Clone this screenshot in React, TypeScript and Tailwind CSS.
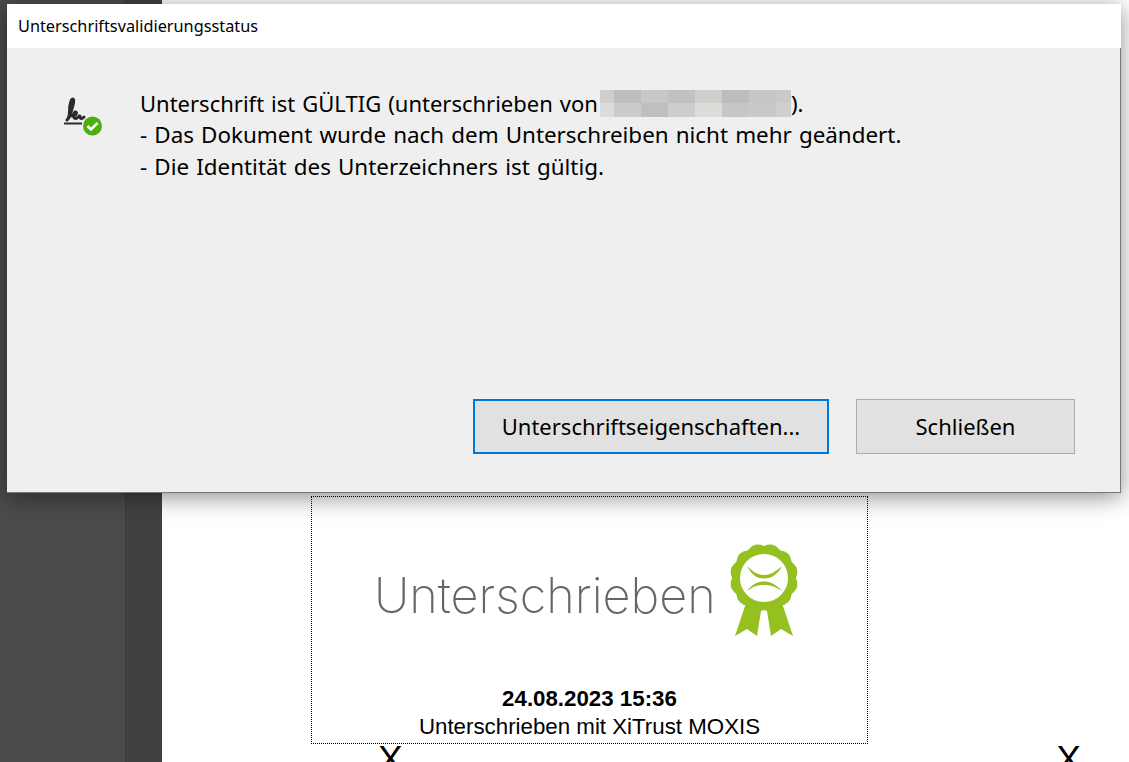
import React from 'react';

const uiFont = "font-['Noto_Sans','Open_Sans',sans-serif]";

// mosaic over the redacted signer name
const mosaicTop = [
  'w-[14px] bg-[#cfcfcd]',
  'w-[27px] bg-[#bdbdbd]',
  'w-[27px] bg-[#c8c8c5]',
  'w-[27px] bg-[#c1c1c1]',
  'w-[27px] bg-[#cfcfcc]',
  'w-[27px] bg-[#bcbdbf]',
  'w-[27px] bg-[#c6c6c6]',
  'w-[15px] bg-[#c9c9c9]',
];
const mosaicBottom = [
  'w-[14px] bg-[#dcdcdb]',
  'w-[27px] bg-[#cbcbcb]',
  'w-[27px] bg-[#bfbfbf]',
  'w-[27px] bg-[#cdcdcd]',
  'w-[27px] bg-[#dcdcda]',
  'w-[27px] bg-[#c6c6c6]',
  'w-[27px] bg-[#c9c9c9]',
  'w-[15px] bg-[#d0cfcc]',
];

// scalloped edge of the rosette
const rosette = (() => {
  const lobes = 12;
  const cx = 50;
  const cy = 37;
  let d = '';
  for (let i = 0; i < lobes; i++) {
    const a = (i / lobes) * Math.PI * 2 - Math.PI / 2;
    const m = ((i + 0.5) / lobes) * Math.PI * 2 - Math.PI / 2;
    const b = ((i + 1) / lobes) * Math.PI * 2 - Math.PI / 2;
    if (i === 0) d += `M${(cx + 32 * Math.cos(a)).toFixed(1)} ${(cy + 32 * Math.sin(a)).toFixed(1)}`;
    d += `Q${(cx + 37.5 * Math.cos(m)).toFixed(1)} ${(cy + 37.5 * Math.sin(m)).toFixed(1)} ${(cx + 32 * Math.cos(b)).toFixed(1)} ${(cy + 32 * Math.sin(b)).toFixed(1)}`;
  }
  return d + 'Z';
})();

const SignatureIcon = () => (
  <svg width="48" height="48" viewBox="0 0 48 48" className="mt-[8px] shrink-0">
    <path
      d="M7 25 C9 24 10 21 11 17 C12.5 12 14.5 7 13.5 4.5 C11.5 2.5 9.5 9 9.5 16 C9.5 20 9 23 7 25 M10.5 20 C13 22 16 20.5 16.5 18 C15.5 15.5 13 18 13.5 21.5 C14.5 25 18 23.5 20 20 C19.5 23 21 25 24 22"
      fill="none"
      stroke="#2b2b2b"
      strokeWidth="3"
      strokeLinecap="round"
    />
    <path d="M4 28.5 H22" stroke="#2b2b2b" strokeWidth="2" />
    <circle cx="32.5" cy="31" r="9.5" fill="#4caf0e" />
    <path d="M27.5 31 L31 34.5 L37.5 28" fill="none" stroke="#ffffff" strokeWidth="2.6" />
  </svg>
);

const Badge = () => (
  <svg width="100" height="100" viewBox="0 0 100 100" className="shrink-0 blur-[0.4px]">
    <path d="M32 62 L21 95 L33 88 L43 95 L47 70 Z" fill="#94c11f" />
    <path d="M68 62 L79 95 L67 88 L57 95 L53 70 Z" fill="#94c11f" />
    <path d={rosette} fill="#94c11f" />
    <circle cx="50" cy="37" r="24" fill="#ffffff" />
    <path d="M33 25 C40 32 45 34 50 34 C55 34 60 32 68 25 C63 35 56 37.5 50 37.5 C44 37.5 38 35 33 25 Z" fill="#94c11f" />
    <path d="M33 50 C39 42 45 40.5 50 40.5 C55 40.5 61 42 68 50 C61 45.5 56 44 50 44 C44 44 39 45.5 33 50 Z" fill="#94c11f" />
  </svg>
);

const App = () => {
  return (
    <div className="relative flex h-[762px] w-[1129px] overflow-hidden bg-white">
      {/* Viewer side panels */}
      <div className="w-[125px] shrink-0 bg-[#4b4b4b]" />
      <div className="w-[37px] shrink-0 border-l border-[#3c3c3c] bg-[#414141]" />

      {/* Document page */}
      <div className="flex-1 pt-[496px] pl-[149px] font-['Liberation_Sans',sans-serif] text-black">
        <div className="flex h-[248px] w-[557px] flex-col items-center border border-dotted border-black">
          <div className="mt-[44px] flex h-[100px] gap-0 self-start pl-[62px]">
            <span className="mt-[30px] -mr-[2px] font-['Inter',sans-serif] text-[48.6px] leading-[50px] font-extralight text-[#666666] blur-[0.4px]">
              Unterschrieben
            </span>
            <Badge />
          </div>
          <p className="mt-[44px] text-[22.3px] leading-[28px] font-bold">24.08.2023 15:36</p>
          <p className="text-[22.3px] leading-[28px]">Unterschrieben mit XiTrust MOXIS</p>
        </div>
        <div className="flex w-[770px] justify-between pl-[67px] text-[37px] leading-[32px]">
          <span>X</span>
          <span>X</span>
        </div>
      </div>

      {/* Validation status dialog */}
      <div
        className={`absolute top-[4px] left-[7px] flex h-[489px] w-[1114px] flex-col bg-[#efefef] text-black shadow-[0_4px_22px_rgba(0,0,0,0.45)] ${uiFont}`}
      >
        <div className="flex h-[44px] shrink-0 items-center bg-white pl-[11px] text-[16.3px]">
          Unterschriftsvalidierungsstatus
        </div>

        <div className="flex flex-1 flex-col border-r border-b border-[#777777]">
          <div className="flex flex-1 pt-[39px] pl-[53px]">
            <SignatureIcon />
            <div className="ml-[32px] text-[22.4px] leading-[32px] [word-spacing:1.3px]">
              <div className="flex items-center text-[22px]">
                <span>Unterschrift ist GÜLTIG (unterschrieben von</span>
                <div className="ml-[2px] flex h-[27px] w-[191px] flex-col">
                  <div className="flex h-[13px]">
                    {mosaicTop.map((cell, i) => (
                      <div key={i} className={cell} />
                    ))}
                  </div>
                  <div className="flex h-[14px]">
                    {mosaicBottom.map((cell, i) => (
                      <div key={i} className={cell} />
                    ))}
                  </div>
                </div>
                <span>).</span>
              </div>
              <p>- Das Dokument wurde nach dem Unterschreiben nicht mehr geändert.</p>
              <p>- Die Identität des Unterzeichners ist gültig.</p>
            </div>
          </div>

          <div className="flex justify-end gap-[27px] pr-[45px] pb-[38px] text-[22px]">
            <button className="h-[55px] w-[356px] border-2 border-[#0078d7] bg-[#e1e1e1]">
              Unterschriftseigenschaften...
            </button>
            <button className="h-[55px] w-[219px] border border-[#adadad] bg-[#e1e1e1]">Schließen</button>
          </div>
        </div>
      </div>
    </div>
  );
};

export default App;
